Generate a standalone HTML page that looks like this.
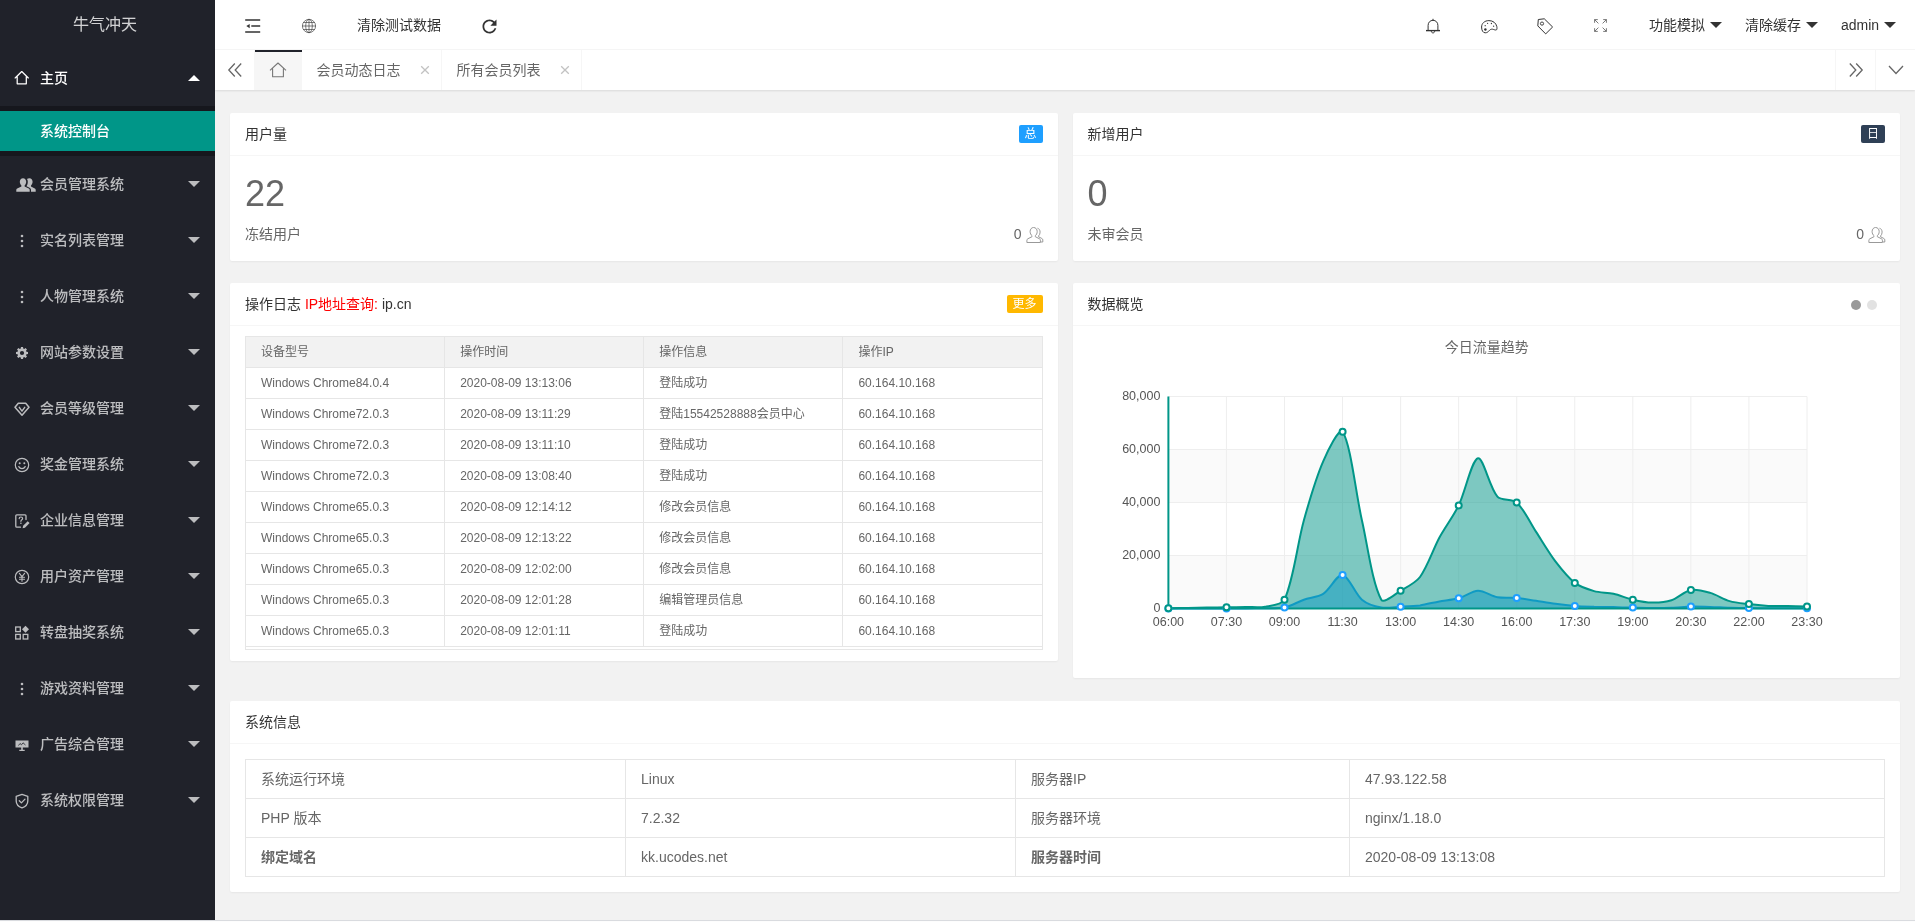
<!DOCTYPE html>
<html lang="zh-CN">
<head>
<meta charset="utf-8">
<title>牛气冲天</title>
<style>
*{box-sizing:border-box;margin:0;padding:0}
html,body{width:1915px;height:922px;overflow:hidden;background:#f2f2f2}
body{font-family:"Liberation Sans","Noto Sans CJK SC",sans-serif;font-size:14px;color:#666;line-height:24px}
.page{position:absolute;left:-5px;top:0;width:1920px;height:922px;overflow:hidden;will-change:transform}
svg{display:block}
.side{position:absolute;left:0;top:0;width:220px;height:922px;background:#20222A;color:rgba(255,255,255,.7)}
.logo{position:absolute;left:0;top:0;width:220px;height:50px;line-height:50px;text-align:center;font-size:16px;color:rgba(255,255,255,.8)}
.nitem{position:absolute;left:0;width:220px;height:56px;line-height:56px;font-weight:500}
.nitem .ico{position:absolute;left:19px;top:21px;width:16px;height:16px}
.nitem .t{position:absolute;left:45px;top:0}
.nitem.on{color:#fff}
.arr{position:absolute;right:15px;top:25px;width:0;height:0;border:6px solid transparent;border-top-color:rgba(255,255,255,.7);border-bottom-width:0}
.arr.up{border:6px solid transparent;border-bottom-color:#fff;border-top-width:0;top:25px}
.child{position:absolute;left:0;top:106px;width:220px;height:50px;background:rgba(0,0,0,.3);padding:5px 0}
.child .this{height:40px;line-height:40px;background:#009688;color:#fff;padding-left:45px;font-weight:500}
.header{position:absolute;left:220px;top:0;width:1700px;height:50px;background:#fff;border-bottom:1px solid #f6f6f6}
.header .ic{position:absolute}
.header .ic, .header .htxt{margin-left:-220px}
.htxt{position:absolute;top:0;height:50px;line-height:50px;color:#333;white-space:nowrap}
.harr{display:inline-block;vertical-align:middle;width:0;height:0;border:6px solid transparent;border-top-color:#333;border-bottom-width:0;margin-left:5px;position:relative;top:-1px}
.tabs{position:absolute;left:220px;top:50px;width:1700px;height:40px;background:#fff;box-shadow:0 1px 2px 0 rgba(0,0,0,.1);z-index:2}
.tabs>*{margin-left:-220px}
.ctl{position:absolute;top:0;width:40px;height:40px;color:#666}
.ctl svg{position:absolute;left:12px;top:12px}
.tab{position:absolute;top:0;height:40px;line-height:40px;padding:0 40px 0 15px;border-right:1px solid #f6f6f6;color:#666;width:140px;white-space:nowrap}
.tab.home{left:260px;width:46.5px;padding:0;background:#f6f6f6;border-right:0}
.tab.home:after{content:"";position:absolute;left:0;top:0;width:100%;height:2px;background:#20222A}
.tab.home svg{position:absolute;left:14px;top:11.5px;color:#777}
.tab .x{position:absolute;right:11px;top:15px;color:#c2c2c2}
.body{position:absolute;left:0;top:0;width:1920px;height:922px}
.card{position:absolute;background:#fff;border-radius:2px;box-shadow:0 1px 2px 0 rgba(0,0,0,.05)}
.chead{position:relative;height:43px;line-height:42px;padding:0 15px;border-bottom:1px solid #f6f6f6;color:#333;font-size:14px}
.badge{position:absolute;right:15px;top:12px;height:18px;line-height:18px;padding:0;width:24px;text-align:center;font-size:12px;color:#fff;border-radius:2px}
.big{position:absolute;left:15px;top:63px;font-size:36px;line-height:36px;color:#666}
.sub{position:absolute;left:15px;right:15px;top:109px;line-height:24px}
.sub .r{position:absolute;right:0;top:0;padding-right:21px}
.uic{position:absolute;right:-1px;top:4px;color:#999}
.dot{position:absolute;top:17px;width:10px;height:10px;border-radius:50%}
table{border-collapse:collapse;border-spacing:0}
table.log{position:absolute;left:15px;top:53px;width:797.5px;table-layout:fixed;font-size:12px;color:#666}
table.log th,table.log td{border:1px solid #e6e6e6;height:31px;line-height:20px;padding:5px 15px;text-align:left;font-weight:400;white-space:nowrap;overflow:hidden}
table.log th{background:#f2f2f2}
.logfoot{position:absolute;left:15px;top:363px;width:797.5px;height:4.5px;border:1px solid #e6e6e6;border-top:0}
.chart{position:absolute;left:15.5px;top:53.5px}
.chart text{font-family:"Liberation Sans","Noto Sans CJK SC",sans-serif}
table.sys{position:absolute;left:15px;top:58px;width:1640px;table-layout:fixed;font-size:14px;color:#666}
table.sys td{border:1px solid #e6e6e6;height:39px;line-height:20px;padding:9px 15px}
.bline{position:absolute;left:0;top:920px;width:1920px;height:2px;background:#fdfdfd;border-top:1px solid #d9dbdf;z-index:5}
</style>
</head>
<body>
<div class="page">
<div class="side">
<div class="logo">牛气冲天</div>
<div class="nitem on" style="top:50px"><span class="ico" ><svg viewBox="0 0 16 16" width="15.500" height="15.500" style="margin-top:-1px"><path d="M1.2 8.2 L8 1.6 L14.8 8.2 M3.3 7 V14.3 H12.7 V7" fill="none" stroke="currentColor" stroke-width="1.3" stroke-linejoin="round" stroke-linecap="round"/></svg></span><span class="t">主页</span><i class="arr up"></i></div>
<div class="child"><div class="this">系统控制台</div></div>
<div class="nitem" style="top:156px"><span class="ico"><svg viewBox="0 0 20 16" width="20" height="16" style="margin-left:1.500px"><path d="M7 1.2c1.9 0 3.2 1.5 3.2 3.6 0 1.500-.7 2.900-1.600 3.700v1.100l4.200 2.000c.6.300.9.800.9 1.500V14.800H.3V13.100c0-.7.3-1.200.9-1.500L5.400 9.600V8.500C4.500 7.700 3.800 6.300 3.800 4.800 3.800 2.700 5.100 1.200 7 1.200z" fill="currentColor"/><path d="M13.400 1.200c1.900 0 3.200 1.500 3.200 3.600 0 1.500-.7 2.900-1.600 3.700v1.100l3.800 1.900c.6.300.9.800.9 1.500v1.800h-4.700v-1.700c0-1.100-.5-1.900-1.400-2.400l-3.100-1.500c.8-1 1.300-2.500 1.300-4.400 0-1.100-.3-2.100-.8-2.900.6-.5 1.400-.7 2.400-.7z" fill="currentColor"/></svg></span><span class="t">会员管理系统</span><i class="arr"></i></div>
<div class="nitem" style="top:212px"><span class="ico"><svg viewBox="0 0 16 16" width="16" height="16"><circle cx="8" cy="3" r="1.3" fill="currentColor"/><circle cx="8" cy="8" r="1.3" fill="currentColor"/><circle cx="8" cy="13" r="1.3" fill="currentColor"/></svg></span><span class="t">实名列表管理</span><i class="arr"></i></div>
<div class="nitem" style="top:268px"><span class="ico"><svg viewBox="0 0 16 16" width="16" height="16"><circle cx="8" cy="3" r="1.3" fill="currentColor"/><circle cx="8" cy="8" r="1.3" fill="currentColor"/><circle cx="8" cy="13" r="1.3" fill="currentColor"/></svg></span><span class="t">人物管理系统</span><i class="arr"></i></div>
<div class="nitem" style="top:324px"><span class="ico"><svg viewBox="0 0 16 16" width="16" height="16"><path d="M14.01 6.97 L14.01 9.03 L12.43 9.23 L12.00 10.27 L12.98 11.52 L11.52 12.98 L10.27 12.00 L9.23 12.43 L9.03 14.01 L6.97 14.01 L6.77 12.43 L5.73 12.00 L4.48 12.98 L3.02 11.52 L4.00 10.27 L3.57 9.23 L1.99 9.03 L1.99 6.97 L3.57 6.77 L4.00 5.73 L3.02 4.48 L4.48 3.02 L5.73 4.00 L6.77 3.57 L6.97 1.99 L9.03 1.99 L9.23 3.57 L10.27 4.00 L11.52 3.02 L12.98 4.48 L12.00 5.73 L12.43 6.77Z M8 5.900a2.100 2.100 0 1 0 0 4.200a2.100 2.100 0 1 0 0-4.200z" fill="currentColor" fill-rule="evenodd"/></svg></span><span class="t">网站参数设置</span><i class="arr"></i></div>
<div class="nitem" style="top:380px"><span class="ico"><svg viewBox="0 0 16 16" width="16" height="16"><path d="M4.300 2.300H11.700L15 6.300 8 14.200 1 6.300z" fill="none" stroke="currentColor" stroke-width="1.500" stroke-linejoin="round"/><path d="M5.300 6.300 8 10.200 10.700 6.300" fill="none" stroke="currentColor" stroke-width="1.400" stroke-linejoin="round" stroke-linecap="round"/></svg></span><span class="t">会员等级管理</span><i class="arr"></i></div>
<div class="nitem" style="top:436px"><span class="ico"><svg viewBox="0 0 16 16" width="16" height="16"><circle cx="8" cy="8" r="6.700" fill="none" stroke="currentColor" stroke-width="1.200"/><circle cx="5.700" cy="6.300" r="1" fill="currentColor"/><circle cx="10.300" cy="6.300" r="1" fill="currentColor"/><path d="M4.800 9.600c.8 1.500 1.900 2.100 3.200 2.100s2.400-.6 3.200-2.100" fill="none" stroke="currentColor" stroke-width="1.200" stroke-linecap="round"/></svg></span><span class="t">奖金管理系统</span><i class="arr"></i></div>
<div class="nitem" style="top:492px"><span class="ico"><svg viewBox="0 0 16 16" width="16" height="16"><path d="M12 6.500V2.800c0-.6-.4-1-1-1H2.800c-.6 0-1 .4-1 1v10.400c0 .6.400 1 1 1H6.500" fill="none" stroke="currentColor" stroke-width="1.300" stroke-linecap="round"/><path d="M5.200 5.600c0-1 .7-1.600 1.700-1.600s1.700.6 1.700 1.500c0 1.300-1.700 1.300-1.700 2.800" fill="none" stroke="currentColor" stroke-width="1.200" stroke-linecap="round"/><circle cx="6.900" cy="10.300" r=".8" fill="currentColor"/><path d="M8.600 15.200l.5-2.400 4.600-4.600 1.900 1.900-4.600 4.600z" fill="currentColor"/></svg></span><span class="t">企业信息管理</span><i class="arr"></i></div>
<div class="nitem" style="top:548px"><span class="ico"><svg viewBox="0 0 16 16" width="16" height="16"><circle cx="8" cy="8" r="6.700" fill="none" stroke="currentColor" stroke-width="1.200"/><path d="M5.400 4.300 8 7.700 10.600 4.300M8 7.700V12.200M5.500 8.300H10.500M5.500 10.200H10.500" fill="none" stroke="currentColor" stroke-width="1.100" stroke-linecap="round"/></svg></span><span class="t">用户资产管理</span><i class="arr"></i></div>
<div class="nitem" style="top:604px"><span class="ico"><svg viewBox="0 0 16 16" width="16" height="16"><rect x="1.700" y="2" width="4.600" height="4.600" fill="none" stroke="currentColor" stroke-width="1.300"/><rect x="1.700" y="9.400" width="4.600" height="4.600" fill="none" stroke="currentColor" stroke-width="1.300"/><rect x="9.200" y="9.400" width="4.600" height="4.600" fill="none" stroke="currentColor" stroke-width="1.300"/><path d="M11.500 0.800 15 4.300 11.500 7.800 8 4.300z" fill="currentColor"/></svg></span><span class="t">转盘抽奖系统</span><i class="arr"></i></div>
<div class="nitem" style="top:660px"><span class="ico"><svg viewBox="0 0 16 16" width="16" height="16"><circle cx="8" cy="3" r="1.3" fill="currentColor"/><circle cx="8" cy="8" r="1.3" fill="currentColor"/><circle cx="8" cy="13" r="1.3" fill="currentColor"/></svg></span><span class="t">游戏资料管理</span><i class="arr"></i></div>
<div class="nitem" style="top:716px"><span class="ico"><svg viewBox="0 0 16 16" width="16" height="16"><path d="M1.500 3.500h13v7h-13z M5.300 12.800h5.400v1.200H5.300z M7.200 10.500h1.600v2.500H7.200z" fill="currentColor"/><path d="M4.500 8.500 6 6.500 7.500 7.800 9 5.800 11.500 8" fill="none" stroke="#20222A" stroke-width=".8"/></svg></span><span class="t">广告综合管理</span><i class="arr"></i></div>
<div class="nitem" style="top:772px"><span class="ico"><svg viewBox="0 0 16 16" width="16" height="16"><path d="M8 1.300 13.800 3.400V7.900C13.800 11.100 11.400 13.600 8 14.900 4.600 13.600 2.200 11.100 2.200 7.900V3.400z" fill="none" stroke="currentColor" stroke-width="1.300" stroke-linejoin="round"/><path d="M5.300 7.800 7.400 9.900 11 6.100" fill="none" stroke="currentColor" stroke-width="1.300" stroke-linecap="round" stroke-linejoin="round"/></svg></span><span class="t">系统权限管理</span><i class="arr"></i></div>
</div>
<div class="header">
<span class="ic" style="left:250px;top:18px;color:#333"><svg viewBox="0 0 16 16" width="16" height="16"><path d="M0.200 1.900H15.200M6.300 8.100H15.200M0.200 14H15.200" stroke="currentColor" stroke-width="1.500" fill="none"/><path d="M1.300 8.100 4.700 5.900V10.300z" fill="currentColor"/></svg></span><span class="ic" style="left:305.9px;top:18px;color:#444"><svg viewBox="0 0 16 16" width="16" height="16"><g fill="none" stroke="currentColor" stroke-width=".7"><circle cx="8" cy="8" r="6.600"/><ellipse cx="8" cy="8" rx="3.300" ry="6.800"/><path d="M8 1.200V14.800M1.200 8H14.800M2.300 4.500H13.700M2.300 11.500H13.700"/></g></svg></span><span class="htxt" style="left:362px">清除测试数据</span><span class="ic" style="left:483.6px;top:16px;color:#333"><svg viewBox="0 0 24 24" width="21" height="21"><path d="M17.650 6.350C16.200 4.900 14.210 4 12 4c-4.420 0-7.990 3.580-7.990 8s3.570 8 7.990 8c3.730 0 6.840-2.550 7.730-6h-2.080c-.82 2.330-3.040 4-5.650 4-3.310 0-6-2.690-6-6s2.690-6 6-6c1.660 0 3.140.69 4.220 1.780L13 11h7V4l-2.350 2.350z" fill="currentColor"/></svg></span>
<span class="ic" style="left:1430.2px;top:18px;color:#333"><svg viewBox="0 0 16 16" width="16" height="16"><path d="M3.100 12.400V7.400C3.100 4.400 5.200 2.300 8 2.300S12.900 4.400 12.900 7.400V12.400M8 2.300V1.200M6.300 13.200c0 1 .7 1.700 1.700 1.700s1.700-.7 1.700-1.700" fill="none" stroke="currentColor" stroke-width="1" stroke-linecap="round"/><path d="M1 12.600H15" stroke="currentColor" stroke-width="1.400" fill="none"/></svg></span><span class="ic" style="left:1486.1px;top:20px;color:#333"><svg viewBox="0 0 17 14" width="17" height="14"><path d="M7.900 .6C3.500 .6 .6 3.500 .6 7 .6 10.500 2 12.800 4.200 12.800 6 12.800 7 12 8 10.800 9 9.600 10.200 9 11.500 9.200 13 9.500 14.500 10.400 15.500 9.800 16.200 9.300 16 7.500 15.800 6.500 15 3 12 .6 7.900 .6z" fill="none" stroke="currentColor" stroke-width="1"/><circle cx="4.400" cy="9.500" r="1.200" fill="currentColor"/><circle cx="4.200" cy="5.700" r=".65" fill="currentColor"/><circle cx="6.600" cy="3.300" r=".65" fill="currentColor"/><circle cx="10.400" cy="3.500" r=".65" fill="currentColor"/><circle cx="12.600" cy="6.200" r=".65" fill="currentColor"/></svg></span><span class="ic" style="left:1541.8px;top:17.6px;color:#333"><svg viewBox="0 0 17 17" width="17" height="17"><path d="M1.300 1.500 7.300 .8 15.600 9 8.700 15.900 .8 7.900z" fill="none" stroke="currentColor" stroke-width="1" stroke-linejoin="round"/><circle cx="5" cy="5.600" r="1.600" fill="none" stroke="currentColor" stroke-width=".9"/></svg></span><span class="ic" style="left:1599.2px;top:19.2px;color:#555"><svg viewBox="0 0 13 13" width="13" height="13"><path d="M.6 3.800V.6H3.800M.6 .6 4.400 4.400M9.200 .6H12.400V3.800M12.400 .6 8.600 4.400M.6 9.200V12.400H3.800M.6 12.400 4.400 8.600M12.400 9.200V12.400H9.200M12.400 12.400 8.600 8.600" fill="none" stroke="currentColor" stroke-width=".8"/></svg></span>
<span class="htxt" style="left:1654px">功能模拟<i class="harr"></i></span><span class="htxt" style="left:1750px">清除缓存<i class="harr"></i></span><span class="htxt" style="left:1846px">admin<i class="harr"></i></span>
</div>
<div class="tabs">
<div class="ctl" style="left:220px;border-right:1px solid #f6f6f6"><svg viewBox="0 0 16 16" width="16" height="16"><path d="M7.800 1.500 1.800 8 7.800 14.500M14.200 1.500 8.200 8 14.200 14.500" fill="none" stroke="currentColor" stroke-width="1.300"/></svg></div>
<div class="tab home"><svg viewBox="0 0 18 16" width="18" height="16"><path d="M1 8.300 9 1 17 8.300M3.600 6.500V14.800H14.400V6.500" fill="none" stroke="currentColor" stroke-width="1.100" stroke-linejoin="round"/></svg></div><div class="tab" style="left:306.500px">会员动态日志<span class="x"><svg viewBox="0 0 10 10" width="10" height="10"><path d="M1.200 1.200 8.800 8.800M8.800 1.200 1.200 8.800" stroke="currentColor" stroke-width="1.300" fill="none"/></svg></span></div><div class="tab" style="left:446.500px">所有会员列表<span class="x"><svg viewBox="0 0 10 10" width="10" height="10"><path d="M1.200 1.200 8.800 8.800M8.800 1.200 1.200 8.800" stroke="currentColor" stroke-width="1.300" fill="none"/></svg></span></div>
<div class="ctl" style="left:1840px;border-left:1px solid #f6f6f6"><svg viewBox="0 0 16 16" width="16" height="16"><path d="M1.800 1.500 7.800 8 1.800 14.500M8.200 1.500 14.200 8 8.200 14.500" fill="none" stroke="currentColor" stroke-width="1.300"/></svg></div><div class="ctl" style="left:1880px;border-left:1px solid #f6f6f6"><svg viewBox="0 0 16 16" width="16" height="16"><path d="M1 4 8 11.500 15 4" fill="none" stroke="currentColor" stroke-width="1.300"/></svg></div>
</div>
<div class="body">
<div class="card" style="left:235px;top:112.500px;width:827.500px;height:148px">
<div class="chead">用户量<span class="badge" style="background:#1E9FFF">总</span></div>
<div class="big">22</div>
<div class="sub">冻结用户<span class="r">0 <i class="uic"><svg viewBox="0 0 18 18" width="18" height="18"><g fill="none" stroke="currentColor" stroke-width="1"><path d="M7.500 1.500c2.200 0 3.700 1.700 3.700 4.100 0 1.700-.8 3.300-1.900 4.100v1l4.200 2.100c.6.300.9.800.9 1.400v2.300H.9v-2.300c0-.6.300-1.100.9-1.400l4.200-2.100v-1C4.900 8.900 4.100 7.300 4.100 5.600c0-2.400 1.500-4.100 3.400-4.100z"/><path d="M11.500 2.200c1.600.4 2.600 1.900 2.600 3.900 0 1.600-.6 3-1.500 3.800v.9l3.300 1.700c.6.300.9.800.9 1.400v2.100h-2.200"/></g></svg></i></span></div>
</div>
<div class="card" style="left:1077.5px;top:112.500px;width:827.500px;height:148px">
<div class="chead">新增用户<span class="badge" style="background:#2F4056">日</span></div>
<div class="big">0</div>
<div class="sub">未审会员<span class="r">0 <i class="uic"><svg viewBox="0 0 18 18" width="18" height="18"><g fill="none" stroke="currentColor" stroke-width="1"><path d="M7.500 1.500c2.200 0 3.700 1.700 3.700 4.100 0 1.700-.8 3.300-1.900 4.100v1l4.200 2.100c.6.300.9.800.9 1.400v2.300H.9v-2.300c0-.6.300-1.100.9-1.400l4.200-2.100v-1C4.900 8.900 4.100 7.300 4.100 5.600c0-2.400 1.500-4.100 3.400-4.100z"/><path d="M11.500 2.200c1.600.4 2.600 1.900 2.600 3.900 0 1.600-.6 3-1.500 3.800v.9l3.300 1.700c.6.300.9.800.9 1.400v2.100h-2.200"/></g></svg></i></span></div>
</div>
<div class="card" style="left:235px;top:282.500px;width:827.500px;height:378px">
<div class="chead">操作日志 <span style="color:#FF0000">IP地址查询:</span> ip.cn<span class="badge" style="background:#FFB800;width:36px">更多</span></div>
<table class="log"><thead><tr><th>设备型号</th><th>操作时间</th><th>操作信息</th><th>操作IP</th></tr></thead><tbody>
<tr><td>Windows Chrome84.0.4</td><td>2020-08-09 13:13:06</td><td>登陆成功</td><td>60.164.10.168</td></tr>
<tr><td>Windows Chrome72.0.3</td><td>2020-08-09 13:11:29</td><td>登陆15542528888会员中心</td><td>60.164.10.168</td></tr>
<tr><td>Windows Chrome72.0.3</td><td>2020-08-09 13:11:10</td><td>登陆成功</td><td>60.164.10.168</td></tr>
<tr><td>Windows Chrome72.0.3</td><td>2020-08-09 13:08:40</td><td>登陆成功</td><td>60.164.10.168</td></tr>
<tr><td>Windows Chrome65.0.3</td><td>2020-08-09 12:14:12</td><td>修改会员信息</td><td>60.164.10.168</td></tr>
<tr><td>Windows Chrome65.0.3</td><td>2020-08-09 12:13:22</td><td>修改会员信息</td><td>60.164.10.168</td></tr>
<tr><td>Windows Chrome65.0.3</td><td>2020-08-09 12:02:00</td><td>修改会员信息</td><td>60.164.10.168</td></tr>
<tr><td>Windows Chrome65.0.3</td><td>2020-08-09 12:01:28</td><td>编辑管理员信息</td><td>60.164.10.168</td></tr>
<tr><td>Windows Chrome65.0.3</td><td>2020-08-09 12:01:11</td><td>登陆成功</td><td>60.164.10.168</td></tr>
</tbody></table><div class="logfoot"></div>
</div>
<div class="card" style="left:1077.500px;top:282.500px;width:827.500px;height:395px">
<div class="chead">数据概览<i class="dot" style="right:39px;background:#999"></i><i class="dot" style="right:23px;background:#e2e2e2"></i></div>
<svg class="chart" width="797.5" height="332" viewBox="0 0 797.5 332">
<text x="398.75" y="16" text-anchor="middle" font-size="14" fill="#666">今日流量趋势</text>
<rect x="80.4" y="60.5" width="638.6" height="53" fill="#fff"/>
<rect x="80.4" y="113.5" width="638.6" height="53" fill="#fafafa"/>
<rect x="80.4" y="166.5" width="638.6" height="53" fill="#fff"/>
<rect x="80.4" y="219.5" width="638.6" height="53" fill="#fafafa"/>
<path d="M80.4 60.5H719.0M80.4 113.5H719.0M80.4 166.5H719.0M80.4 219.5H719.0M80.4 272.5H719.0M80.40 60.5V272.5M138.45 60.5V272.5M196.51 60.5V272.5M254.56 60.5V272.5M312.62 60.5V272.5M370.67 60.5V272.5M428.73 60.5V272.5M486.78 60.5V272.5M544.84 60.5V272.5M602.89 60.5V272.5M660.95 60.5V272.5M719.00 60.5V272.5" stroke="#eee" stroke-width="1" fill="none"/>
<text x="72.4" y="63.9" text-anchor="end" font-size="12.5" fill="#555">80,000</text>
<text x="72.4" y="116.9" text-anchor="end" font-size="12.5" fill="#555">60,000</text>
<text x="72.4" y="169.9" text-anchor="end" font-size="12.5" fill="#555">40,000</text>
<text x="72.4" y="222.9" text-anchor="end" font-size="12.5" fill="#555">20,000</text>
<text x="72.4" y="275.9" text-anchor="end" font-size="12.5" fill="#555">0</text>
<text x="80.40" y="290.0" text-anchor="middle" font-size="12.5" fill="#555">06:00</text>
<text x="138.45" y="290.0" text-anchor="middle" font-size="12.5" fill="#555">07:30</text>
<text x="196.51" y="290.0" text-anchor="middle" font-size="12.5" fill="#555">09:00</text>
<text x="254.56" y="290.0" text-anchor="middle" font-size="12.5" fill="#555">11:30</text>
<text x="312.62" y="290.0" text-anchor="middle" font-size="12.5" fill="#555">13:00</text>
<text x="370.67" y="290.0" text-anchor="middle" font-size="12.5" fill="#555">14:30</text>
<text x="428.73" y="290.0" text-anchor="middle" font-size="12.5" fill="#555">16:00</text>
<text x="486.78" y="290.0" text-anchor="middle" font-size="12.5" fill="#555">17:30</text>
<text x="544.84" y="290.0" text-anchor="middle" font-size="12.5" fill="#555">19:00</text>
<text x="602.89" y="290.0" text-anchor="middle" font-size="12.5" fill="#555">20:30</text>
<text x="660.95" y="290.0" text-anchor="middle" font-size="12.5" fill="#555">22:00</text>
<text x="719.00" y="290.0" text-anchor="middle" font-size="12.5" fill="#555">23:30</text>
<path d="M80.4 272.5C80.4 272.5 93.9 272.5 99.8 272.4C105.6 272.4 113.3 272.4 119.1 272.4C124.9 272.4 132.6 272.4 138.5 272.4C144.3 272.4 152.0 272.4 157.8 272.4C163.6 272.3 171.4 272.4 177.2 272.3C183.0 272.2 190.9 272.5 196.5 271.6C202.5 270.3 210.0 265.8 215.9 263.7C221.6 261.6 230.2 261.0 235.2 257.8C241.9 253.5 249.2 238.1 254.6 238.9C260.8 239.9 266.9 257.8 273.9 263.7C278.6 267.6 287.2 270.5 293.3 271.6C298.8 272.5 306.8 271.1 312.6 270.7C318.4 270.4 326.2 270.1 332.0 269.4C337.8 268.5 345.5 266.5 351.3 265.4C357.1 264.4 365.0 263.7 370.7 262.2C376.6 260.6 384.2 255.0 390.0 254.8C395.8 254.7 403.4 260.2 409.4 261.3C415.0 262.3 423.0 261.4 428.7 261.9C434.6 262.4 442.3 264.0 448.1 264.8C453.9 265.7 461.6 267.0 467.4 267.8C473.2 268.6 481.0 269.5 486.8 269.9C492.6 270.4 500.3 270.6 506.1 270.8C511.9 270.9 519.7 270.9 525.5 271.0C531.3 271.2 539.0 271.5 544.8 271.6C550.6 271.7 558.4 271.9 564.2 271.9C570.0 271.9 577.7 271.9 583.5 271.7C589.3 271.5 597.1 270.8 602.9 270.6C608.7 270.5 616.4 270.8 622.2 270.9C628.1 271.1 635.8 271.6 641.6 271.8C647.4 271.9 655.1 272.0 660.9 272.1C666.8 272.1 674.5 272.2 680.3 272.2C686.1 272.3 693.8 272.3 699.6 272.3C705.5 272.3 719.0 272.3 719.0 272.3L719.0 272.5 L80.4 272.5Z" fill="rgba(30,159,255,0.5)"/>
<path d="M80.4 272.5C80.4 272.5 93.9 272.5 99.8 272.4C105.6 272.4 113.3 272.4 119.1 272.4C124.9 272.4 132.6 272.4 138.5 272.4C144.3 272.4 152.0 272.4 157.8 272.4C163.6 272.3 171.4 272.4 177.2 272.3C183.0 272.2 190.9 272.5 196.5 271.6C202.5 270.3 210.0 265.8 215.9 263.7C221.6 261.6 230.2 261.0 235.2 257.8C241.9 253.5 249.2 238.1 254.6 238.9C260.8 239.9 266.9 257.8 273.9 263.7C278.6 267.6 287.2 270.5 293.3 271.6C298.8 272.5 306.8 271.1 312.6 270.7C318.4 270.4 326.2 270.1 332.0 269.4C337.8 268.5 345.5 266.5 351.3 265.4C357.1 264.4 365.0 263.7 370.7 262.2C376.6 260.6 384.2 255.0 390.0 254.8C395.8 254.7 403.4 260.2 409.4 261.3C415.0 262.3 423.0 261.4 428.7 261.9C434.6 262.4 442.3 264.0 448.1 264.8C453.9 265.7 461.6 267.0 467.4 267.8C473.2 268.6 481.0 269.5 486.8 269.9C492.6 270.4 500.3 270.6 506.1 270.8C511.9 270.9 519.7 270.9 525.5 271.0C531.3 271.2 539.0 271.5 544.8 271.6C550.6 271.7 558.4 271.9 564.2 271.9C570.0 271.9 577.7 271.9 583.5 271.7C589.3 271.5 597.1 270.8 602.9 270.6C608.7 270.5 616.4 270.8 622.2 270.9C628.1 271.1 635.8 271.6 641.6 271.8C647.4 271.9 655.1 272.0 660.9 272.1C666.8 272.1 674.5 272.2 680.3 272.2C686.1 272.3 693.8 272.3 699.6 272.3C705.5 272.3 719.0 272.3 719.0 272.3" fill="none" stroke="#1E9FFF" stroke-width="2"/>
<path d="M80.4 272.2C80.4 272.2 93.9 272.0 99.8 271.9C105.6 271.8 113.3 271.7 119.1 271.6C124.9 271.5 132.6 271.4 138.5 271.3C144.3 271.2 152.0 271.1 157.8 271.0C163.6 270.9 171.5 271.8 177.2 270.7C183.1 269.6 194.2 268.9 196.5 263.7C205.8 242.9 209.3 207.8 215.9 184.2C220.9 166.3 227.8 142.2 235.2 125.3C239.4 115.7 251.3 90.9 254.6 95.8C262.9 108.5 267.8 157.7 273.9 184.2C279.4 208.1 284.1 246.8 293.3 263.7C295.7 268.0 307.1 258.0 312.6 254.8C318.7 251.2 327.9 246.6 332.0 241.0C339.5 230.7 345.1 213.4 351.3 201.8C356.7 191.9 365.7 179.6 370.7 169.4C377.3 155.7 383.7 123.8 390.0 122.3C395.3 121.1 401.5 151.6 409.4 160.6C413.1 164.9 424.5 162.6 428.7 166.5C436.1 173.2 442.3 187.1 448.1 195.9C453.9 204.8 461.1 217.0 467.4 225.4C472.7 232.3 480.1 241.7 486.8 246.9C491.7 250.6 500.1 253.4 506.1 255.1C511.7 256.7 519.8 256.5 525.5 257.8C531.4 259.1 538.9 262.3 544.8 263.7C550.5 265.0 558.4 266.5 564.2 266.6C570.0 266.7 578.1 266.0 583.5 264.3C589.7 262.2 596.8 255.1 602.9 254.0C608.4 252.9 616.6 255.3 622.2 256.9C628.3 258.6 635.6 263.4 641.6 265.1C647.2 266.8 655.1 267.4 660.9 268.1C666.7 268.8 674.5 269.5 680.3 269.9C686.1 270.2 693.8 270.1 699.6 270.1C705.5 270.2 719.0 270.4 719.0 270.4L719.0 272.5 L80.4 272.5Z" fill="rgba(0,150,136,0.5)"/>
<path d="M80.4 272.2C80.4 272.2 93.9 272.0 99.8 271.9C105.6 271.8 113.3 271.7 119.1 271.6C124.9 271.5 132.6 271.4 138.5 271.3C144.3 271.2 152.0 271.1 157.8 271.0C163.6 270.9 171.5 271.8 177.2 270.7C183.1 269.6 194.2 268.9 196.5 263.7C205.8 242.9 209.3 207.8 215.9 184.2C220.9 166.3 227.8 142.2 235.2 125.3C239.4 115.7 251.3 90.9 254.6 95.8C262.9 108.5 267.8 157.7 273.9 184.2C279.4 208.1 284.1 246.8 293.3 263.7C295.7 268.0 307.1 258.0 312.6 254.8C318.7 251.2 327.9 246.6 332.0 241.0C339.5 230.7 345.1 213.4 351.3 201.8C356.7 191.9 365.7 179.6 370.7 169.4C377.3 155.7 383.7 123.8 390.0 122.3C395.3 121.1 401.5 151.6 409.4 160.6C413.1 164.9 424.5 162.6 428.7 166.5C436.1 173.2 442.3 187.1 448.1 195.9C453.9 204.8 461.1 217.0 467.4 225.4C472.7 232.3 480.1 241.7 486.8 246.9C491.7 250.6 500.1 253.4 506.1 255.1C511.7 256.7 519.8 256.5 525.5 257.8C531.4 259.1 538.9 262.3 544.8 263.7C550.5 265.0 558.4 266.5 564.2 266.6C570.0 266.7 578.1 266.0 583.5 264.3C589.7 262.2 596.8 255.1 602.9 254.0C608.4 252.9 616.6 255.3 622.2 256.9C628.3 258.6 635.6 263.4 641.6 265.1C647.2 266.8 655.1 267.4 660.9 268.1C666.7 268.8 674.5 269.5 680.3 269.9C686.1 270.2 693.8 270.1 699.6 270.1C705.5 270.2 719.0 270.4 719.0 270.4" fill="none" stroke="#009688" stroke-width="2"/>
<path d="M80.4 60.5V272.5M80.4 272.5H719.0" stroke="#009688" stroke-width="2" fill="none"/>
<circle cx="80.4" cy="272.5" r="3" fill="#fff" stroke="#1E9FFF" stroke-width="2"/><circle cx="138.5" cy="272.4" r="3" fill="#fff" stroke="#1E9FFF" stroke-width="2"/><circle cx="196.5" cy="271.6" r="3" fill="#fff" stroke="#1E9FFF" stroke-width="2"/><circle cx="254.6" cy="238.9" r="3" fill="#fff" stroke="#1E9FFF" stroke-width="2"/><circle cx="312.6" cy="270.7" r="3" fill="#fff" stroke="#1E9FFF" stroke-width="2"/><circle cx="370.7" cy="262.2" r="3" fill="#fff" stroke="#1E9FFF" stroke-width="2"/><circle cx="428.7" cy="261.9" r="3" fill="#fff" stroke="#1E9FFF" stroke-width="2"/><circle cx="486.8" cy="269.9" r="3" fill="#fff" stroke="#1E9FFF" stroke-width="2"/><circle cx="544.8" cy="271.6" r="3" fill="#fff" stroke="#1E9FFF" stroke-width="2"/><circle cx="602.9" cy="270.6" r="3" fill="#fff" stroke="#1E9FFF" stroke-width="2"/><circle cx="660.9" cy="272.1" r="3" fill="#fff" stroke="#1E9FFF" stroke-width="2"/><circle cx="719.0" cy="272.3" r="3" fill="#fff" stroke="#1E9FFF" stroke-width="2"/>
<circle cx="80.4" cy="272.2" r="3" fill="#fff" stroke="#009688" stroke-width="2"/><circle cx="138.5" cy="271.3" r="3" fill="#fff" stroke="#009688" stroke-width="2"/><circle cx="196.5" cy="263.7" r="3" fill="#fff" stroke="#009688" stroke-width="2"/><circle cx="254.6" cy="95.8" r="3" fill="#fff" stroke="#009688" stroke-width="2"/><circle cx="312.6" cy="254.8" r="3" fill="#fff" stroke="#009688" stroke-width="2"/><circle cx="370.7" cy="169.4" r="3" fill="#fff" stroke="#009688" stroke-width="2"/><circle cx="428.7" cy="166.5" r="3" fill="#fff" stroke="#009688" stroke-width="2"/><circle cx="486.8" cy="246.9" r="3" fill="#fff" stroke="#009688" stroke-width="2"/><circle cx="544.8" cy="263.7" r="3" fill="#fff" stroke="#009688" stroke-width="2"/><circle cx="602.9" cy="254.0" r="3" fill="#fff" stroke="#009688" stroke-width="2"/><circle cx="660.9" cy="268.1" r="3" fill="#fff" stroke="#009688" stroke-width="2"/><circle cx="719.0" cy="270.4" r="3" fill="#fff" stroke="#009688" stroke-width="2"/>
</svg>
</div>
<div class="card" style="left:235px;top:700.500px;width:1670px;height:191px">
<div class="chead">系统信息</div>
<table class="sys"><colgroup><col style="width:380px"><col style="width:390px"><col style="width:334px"><col></colgroup><tbody>
<tr><td>系统运行环境</td><td>Linux</td><td>服务器IP</td><td>47.93.122.58</td></tr>
<tr><td>PHP 版本</td><td>7.2.32</td><td>服务器环境</td><td>nginx/1.18.0</td></tr>
<tr><td><b>绑定域名</b></td><td>kk.ucodes.net</td><td><b>服务器时间</b></td><td>2020-08-09 13:13:08</td></tr>
</tbody></table>
</div>
</div>
<div class="bline"></div>
</div>
</body>
</html>
